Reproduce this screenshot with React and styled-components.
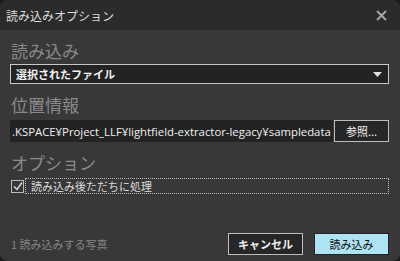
import React from "react";
import styled, { createGlobalStyle } from "styled-components";

const Global = createGlobalStyle`
  html, body { margin: 0; padding: 0; background: #1c1c1c; }
  body { width: 400px; height: 261px; overflow: hidden; font-family: "Noto Sans CJK JP", "Noto Sans", sans-serif; }
`;

const Dialog = styled.div`
  width: 400px;
  height: 261px;
  box-sizing: border-box;
  background: #383838;
  border-radius: 8px;
  overflow: hidden;
  display: flex;
  flex-direction: column;
`;

const TitleBar = styled.div`
  height: 30px;
  background: #2b2b2b;
  display: flex;
  align-items: center;
  justify-content: space-between;
  padding: 0 13px 0 6px;
  color: #dcdcdc;
  font-size: 12px;
`;

const Close = styled.svg`
  width: 11px;
  height: 11px;
`;

const Body = styled.div`
  flex: 1;
  display: flex;
  flex-direction: column;
  padding: 10px 11px 6px 10px;
`;

const SectionLabel = styled.div`
  color: #8a8a8a;
  font-size: 17px;
  line-height: 22px;
  height: 22px;
  margin-left: 1px;
  margin-top: ${(p) => p.$mt || 0}px;
`;

const Select = styled.div`
  height: 20px;
  box-sizing: border-box;
  margin-top: 2px;
  border: 1px solid #c8c8c8;
  background: #232323;
  display: flex;
  align-items: center;
  justify-content: space-between;
  padding: 0 6px 0 5px;
  color: #f2f2f2;
  font-size: 11px;
  font-weight: 700;
`;

const Row = styled.div`
  display: flex;
  gap: 1px;
  margin-top: 4px;
  height: 22px;
`;

const PathBox = styled.div`
  flex: 1;
  min-width: 0;
  background: #232323;
  border-radius: 2px;
  display: flex;
  align-items: center;
  padding-left: 2px;
  color: #f0f0f0;
  font-family: "Open Sans", "Noto Sans CJK JP", sans-serif;
  font-size: 11.35px;
  white-space: nowrap;
`;

const Button = styled.button`
  box-sizing: border-box;
  width: ${(p) => p.$w}px;
  height: ${(p) => p.$h}px;
  flex-shrink: 0;
  background: ${(p) => (p.$primary ? "#ade3f2" : "#262626")};
  border: 1px solid ${(p) => (p.$primary ? "#222" : "#bdbdbd")};
  color: ${(p) => (p.$primary ? "#111" : "#f0f0f0")};
  font-family: "Noto Sans CJK JP", sans-serif;
  font-size: 11px;
  font-weight: ${(p) => (p.$bold ? 700 : 400)};
  padding: 0;
  display: flex;
  align-items: center;
  justify-content: center;
`;

const CheckRow = styled.div`
  display: flex;
  align-items: center;
  margin-top: 4px;
  height: 16px;
`;

const Box = styled.div`
  width: 11px;
  height: 11px;
  border: 1px solid #bdbdbd;
  margin-left: 1px;
  display: flex;
  align-items: center;
  justify-content: center;
`;

const CheckLabel = styled.div`
  flex: 1;
  height: 16px;
  box-sizing: border-box;
  margin-left: 1px;
  border: 1px dotted #bbb;
  padding-left: 5px;
  display: flex;
  align-items: center;
  color: #dcdcdc;
  font-size: 11px;
`;

const Footer = styled.div`
  margin-top: auto;
  display: flex;
  align-items: center;
`;

const Count = styled.div`
  flex: 1;
  color: #858585;
  font-size: 11px;
  margin-left: 1px;
`;

const Buttons = styled.div`
  display: flex;
  gap: 11px;
`;

export default function App() {
  return (
    <>
      <Global />
      <Dialog>
        <TitleBar>
          <span>読み込みオプション</span>
          <Close viewBox="0 0 11 11">
            <path d="M1 1 L10 10 M10 1 L1 10" stroke="#a8a8a8" strokeWidth="1.8" />
          </Close>
        </TitleBar>
        <Body>
          <SectionLabel>読み込み</SectionLabel>
          <Select>
            <span>選択されたファイル</span>
            <svg width="9" height="5" viewBox="0 0 9 5">
              <path d="M0 0 L9 0 L4.5 5 Z" fill="#e0e0e0" />
            </svg>
          </Select>
          <SectionLabel $mt={10}>位置情報</SectionLabel>
          <Row>
            <PathBox>.KSPACE¥Project_LLF¥lightfield-extractor-legacy¥sampledata</PathBox>
            <Button $w={55} $h={22}>参照...</Button>
          </Row>
          <SectionLabel $mt={10}>オプション</SectionLabel>
          <CheckRow>
            <Box>
              <svg width="10" height="9" viewBox="0 0 10 9">
                <path d="M1 4.5 L4 7.5 L9 0.5" stroke="#e0e0e0" strokeWidth="1.4" fill="none" />
              </svg>
            </Box>
            <CheckLabel>読み込み後ただちに処理</CheckLabel>
          </CheckRow>
          <Footer>
            <Count>1 読み込みする写真</Count>
            <Buttons>
              <Button $w={75} $h={22} $bold>キャンセル</Button>
              <Button $w={75} $h={22} $primary>読み込み</Button>
            </Buttons>
          </Footer>
        </Body>
      </Dialog>
    </>
  );
}
